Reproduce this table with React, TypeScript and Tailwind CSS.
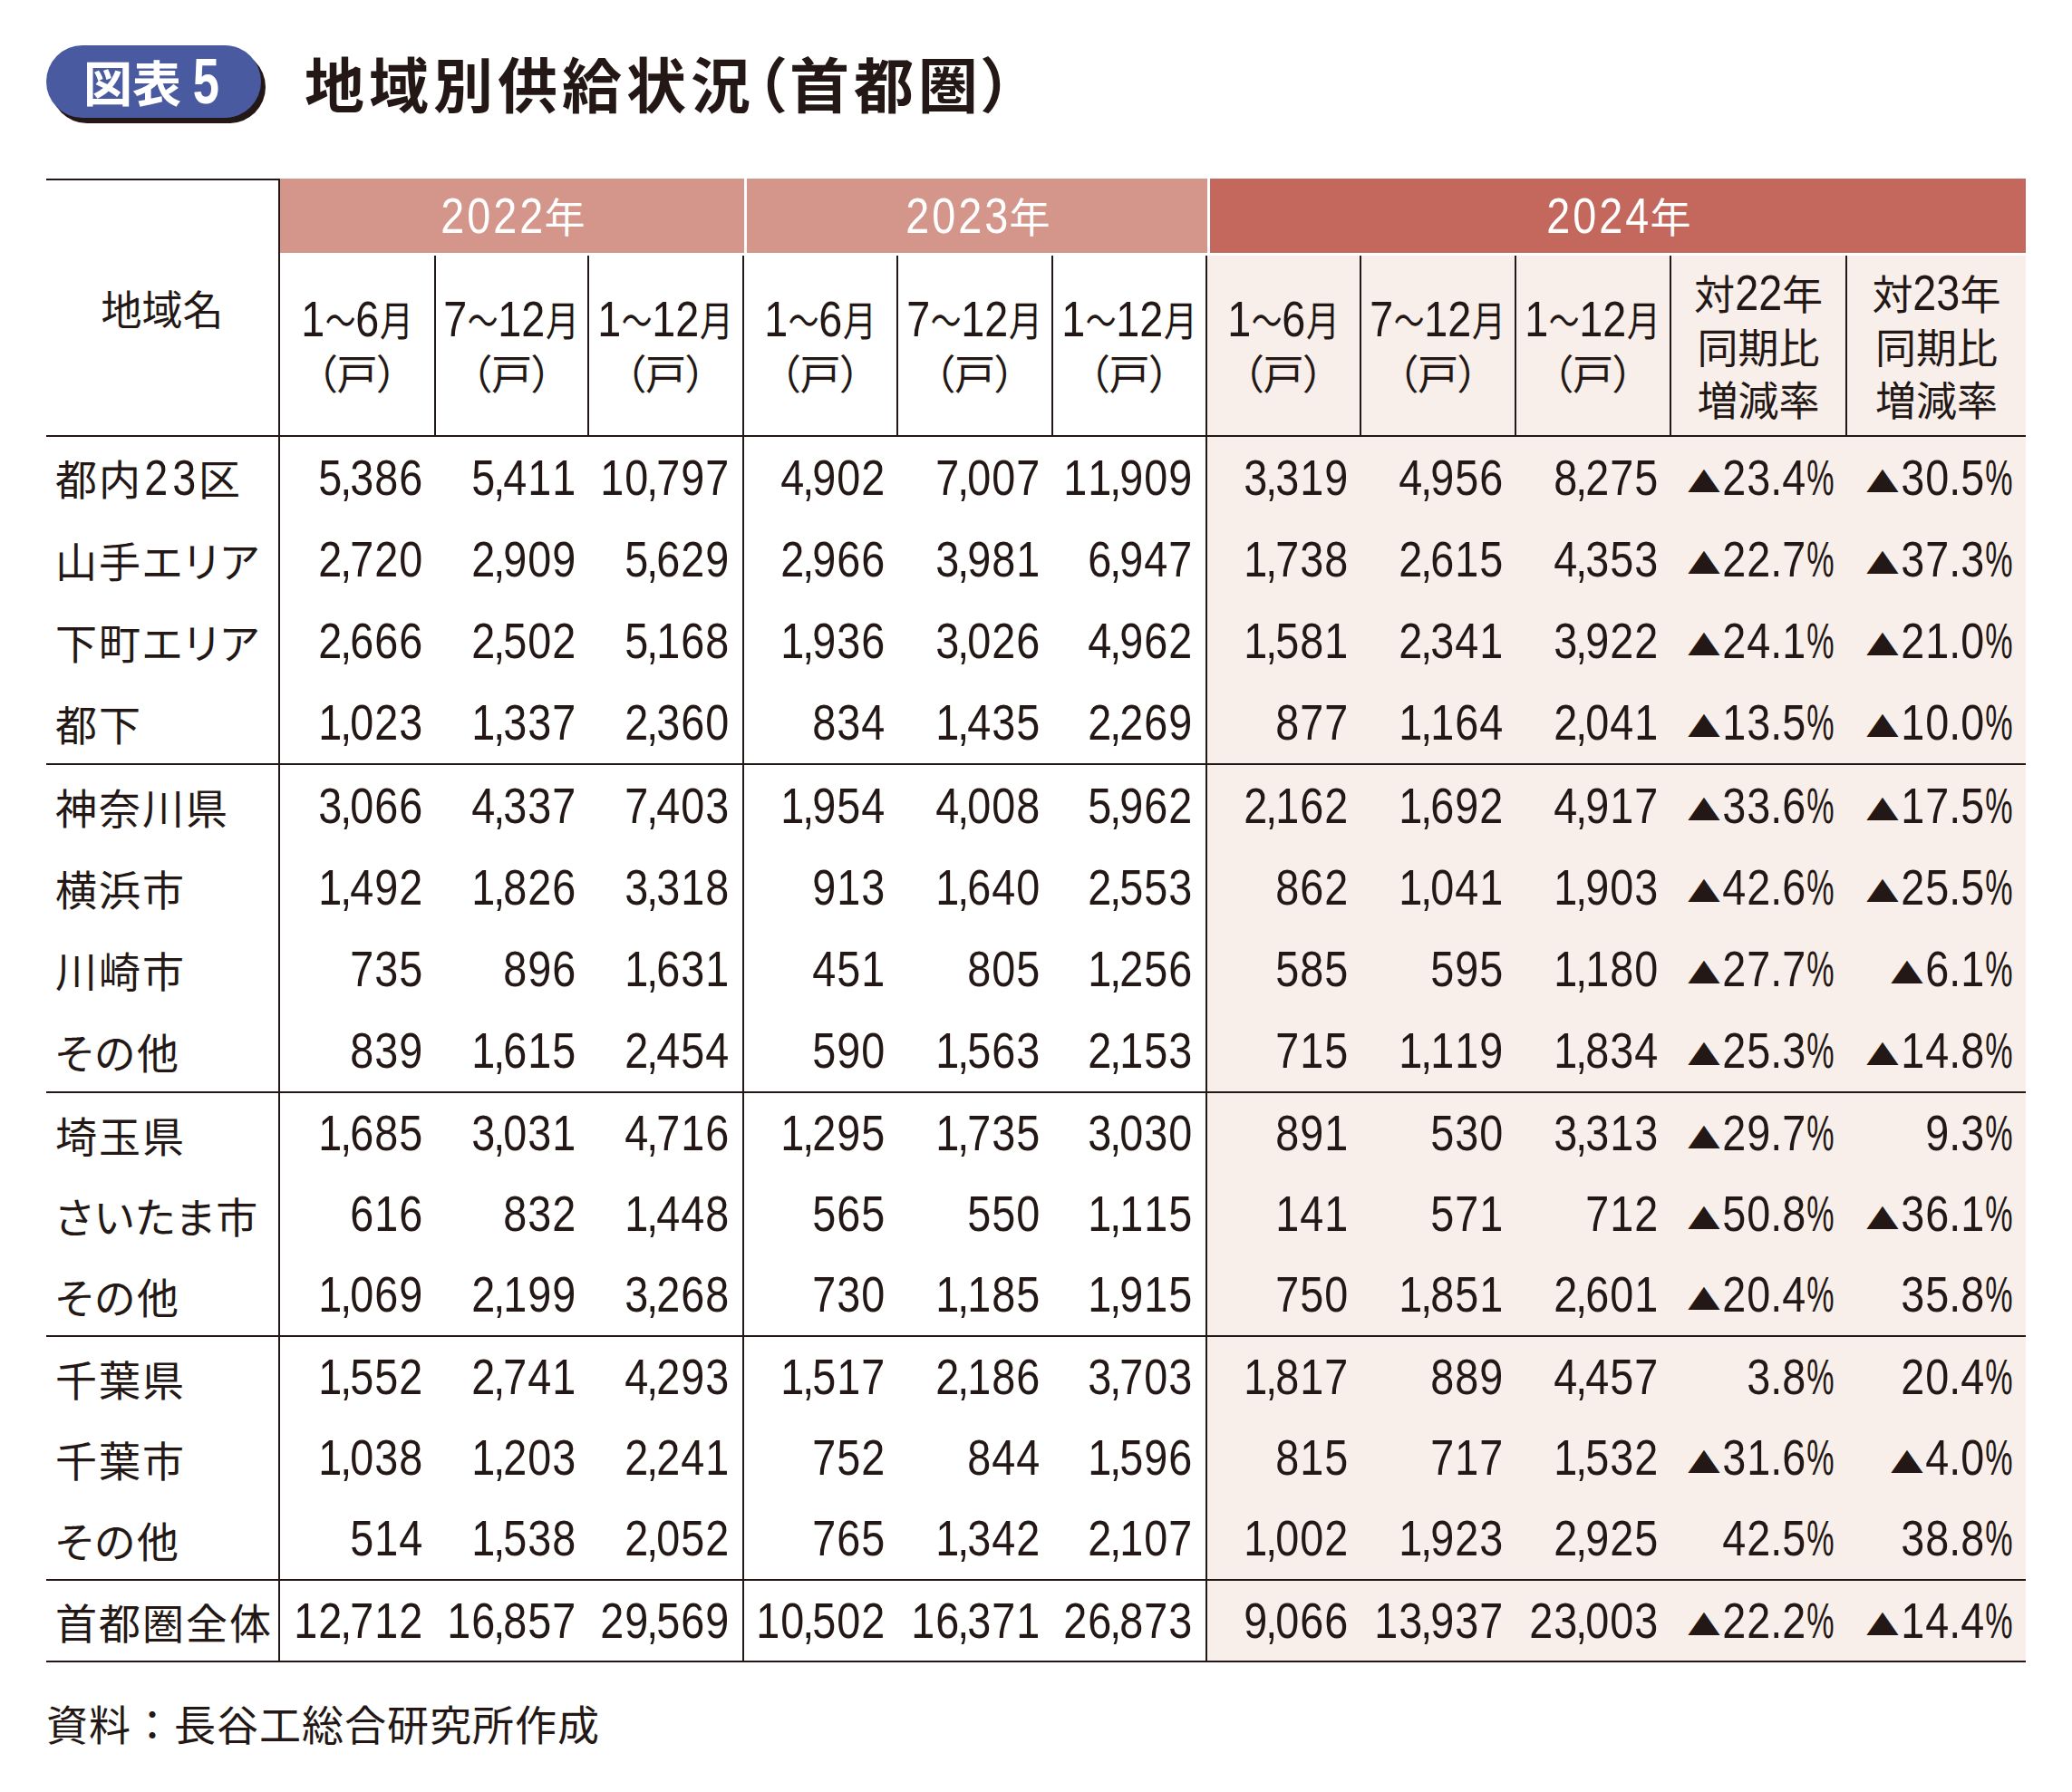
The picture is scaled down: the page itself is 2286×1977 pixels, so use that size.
import type { ReactNode } from 'react'

const NUMFONT = "[font-family:'Liberation_Sans','Arial',sans-serif] text-[55px]"
const JPFONT = "[font-family:'Noto_Sans_CJK_JP',sans-serif]"
const JP = `${JPFONT} text-[45px] leading-none`
const LABEL = `${JPFONT} text-[46px] leading-none tracking-[2px] [font-feature-settings:'palt']`

const ROW_COLS =
  'grid grid-cols-[258px_172px_169px_171px_170px_171px_170px_170px_171px_171px_194px_197px]'
const SUB_COLS =
  'grid grid-cols-[172px_169px_171px_170px_171px_170px_170px_171px_171px_194px_197px]'

const PINK = 'bg-[#f8eeea]'
const LINE = 'border-[#231815]'

type Row = [string, ...string[]]

const sections: { rows: Row[]; h: string }[] = [
  {
    h: 'h-[90px]',
    rows: [
      ['都内23区', '5,386', '5,411', '10,797', '4,902', '7,007', '11,909', '3,319', '4,956', '8,275', '▲23.4%', '▲30.5%'],
      ['山手エリア', '2,720', '2,909', '5,629', '2,966', '3,981', '6,947', '1,738', '2,615', '4,353', '▲22.7%', '▲37.3%'],
      ['下町エリア', '2,666', '2,502', '5,168', '1,936', '3,026', '4,962', '1,581', '2,341', '3,922', '▲24.1%', '▲21.0%'],
      ['都下', '1,023', '1,337', '2,360', '834', '1,435', '2,269', '877', '1,164', '2,041', '▲13.5%', '▲10.0%'],
    ],
  },
  {
    h: 'h-[90px]',
    rows: [
      ['神奈川県', '3,066', '4,337', '7,403', '1,954', '4,008', '5,962', '2,162', '1,692', '4,917', '▲33.6%', '▲17.5%'],
      ['横浜市', '1,492', '1,826', '3,318', '913', '1,640', '2,553', '862', '1,041', '1,903', '▲42.6%', '▲25.5%'],
      ['川崎市', '735', '896', '1,631', '451', '805', '1,256', '585', '595', '1,180', '▲27.7%', '▲6.1%'],
      ['その他', '839', '1,615', '2,454', '590', '1,563', '2,153', '715', '1,119', '1,834', '▲25.3%', '▲14.8%'],
    ],
  },
  {
    h: 'h-[89px]',
    rows: [
      ['埼玉県', '1,685', '3,031', '4,716', '1,295', '1,735', '3,030', '891', '530', '3,313', '▲29.7%', '9.3%'],
      ['さいたま市', '616', '832', '1,448', '565', '550', '1,115', '141', '571', '712', '▲50.8%', '▲36.1%'],
      ['その他', '1,069', '2,199', '3,268', '730', '1,185', '1,915', '750', '1,851', '2,601', '▲20.4%', '35.8%'],
    ],
  },
  {
    h: 'h-[89px]',
    rows: [
      ['千葉県', '1,552', '2,741', '4,293', '1,517', '2,186', '3,703', '1,817', '889', '4,457', '3.8%', '20.4%'],
      ['千葉市', '1,038', '1,203', '2,241', '752', '844', '1,596', '815', '717', '1,532', '▲31.6%', '▲4.0%'],
      ['その他', '514', '1,538', '2,052', '765', '1,342', '2,107', '1,002', '1,923', '2,925', '42.5%', '38.8%'],
    ],
  },
]

const total: Row = ['首都圏全体', '12,712', '16,857', '29,569', '10,502', '16,371', '26,873', '9,066', '13,937', '23,003', '▲22.2%', '▲14.4%']

const subHeads: string[][] = [
  ['1～6月', '（戸）'],
  ['7～12月', '（戸）'],
  ['1～12月', '（戸）'],
  ['1～6月', '（戸）'],
  ['7～12月', '（戸）'],
  ['1～12月', '（戸）'],
  ['1～6月', '（戸）'],
  ['7～12月', '（戸）'],
  ['1～12月', '（戸）'],
  ['対22年', '同期比', '増減率'],
  ['対23年', '同期比', '増減率'],
]

// condensed numerals: each glyph centred in a fixed box and squeezed horizontally
function Glyph({ ch, dw }: { ch: string; dw: string }) {
  const box = ch === ',' ? 'w-[8px]' : ch === '.' ? 'w-[12px]' : ch === '%' ? 'w-[31px]' : dw
  const sq = ch === '%' ? 'scale-x-[0.62]' : 'scale-x-[0.85]'
  return (
    <span className={`inline-flex justify-center ${box}`}>
      <span className={`inline-block leading-none ${NUMFONT} ${sq}`}>{ch}</span>
    </span>
  )
}

function Squeezed({ ch, w, sq }: { ch: string; w: string; sq: string }) {
  return (
    <span className={`inline-flex justify-center ${w}`}>
      <span className={`inline-block ${JP} ${sq}`}>{ch}</span>
    </span>
  )
}

function Chars({
  text,
  dw,
  squeeze,
  jp = JP,
}: {
  text: string
  dw: string
  squeeze?: boolean
  jp?: string
}) {
  const out: ReactNode[] = []
  const tokens = text.match(/[0-9.,%]|～|月|[^0-9.,%～月]+/g) ?? []
  tokens.forEach((t, i) => {
    if (/^[0-9.,%]$/.test(t)) out.push(<Glyph key={i} ch={t} dw={dw} />)
    else if (squeeze && t === '～') out.push(<Squeezed key={i} ch={t} w="w-[34px]" sq="scale-x-[0.75]" />)
    else if (squeeze && t === '月') out.push(<Squeezed key={i} ch={t} w="w-[38px]" sq="scale-x-[0.82]" />)
    else
      out.push(
        <span key={i} className={`${jp} ${t.includes('（') ? "[font-feature-settings:'palt']" : ''}`}>
          {t}
        </span>,
      )
  })
  return <span className="inline-flex items-baseline whitespace-nowrap">{out}</span>
}

function Val({ v }: { v: string }) {
  const neg = v.startsWith('▲')
  const body = neg ? v.slice(1) : v
  return (
    <span className="flex items-center">
      {neg && (
        <span className="inline-flex items-center justify-center w-[30px] h-[22px] mr-[5px]">
          <span className="inline-block leading-none [font-family:'DejaVu_Sans',sans-serif] text-[46px] scale-y-[0.72]">
            ▲
          </span>
        </span>
      )}
      <span className="inline-flex">
        {[...body].map((ch, i) => (
          <Glyph key={i} ch={ch} dw="w-[27px]" />
        ))}
      </span>
    </span>
  )
}

function DataRow({ row, h }: { row: Row; h: string }) {
  const [label, ...vals] = row
  return (
    <div className={`${ROW_COLS} ${h}`}>
      <div className={`flex items-center pl-[10px] border-r-2 ${LINE}`}>
        <Chars text={label} dw="w-[31px]" jp={LABEL} />
      </div>
      {vals.map((v, i) => (
        <div
          key={i}
          className={`flex items-center justify-end pr-[14px] ${i === 2 || i === 5 ? `border-r-2 ${LINE}` : ''} ${i >= 6 ? PINK : ''}`}
        >
          <Val v={v} />
        </div>
      ))}
    </div>
  )
}

export default function App() {
  return (
    <div className="min-h-[1977px] w-[2286px] bg-white text-[#231815] pl-[51px] pt-[50px]">
      <div className="flex items-center h-[80px]">
        <div className="w-[237px] h-[80px] shrink-0 rounded-full bg-[#4a5aa0] shadow-[5px_6px_0_#231815] flex items-center justify-center text-white">
          <span className={`${JPFONT} text-[54px] font-bold leading-none`}>図表</span>
          <span className="[font-family:'Liberation_Sans',sans-serif] text-[70px] font-bold leading-none ml-[8px] inline-block scale-x-[0.75]">
            5
          </span>
        </div>
        <h1
          className={`ml-[48px] ${JPFONT} text-[66px] font-bold tracking-[5px] leading-none [font-feature-settings:'palt'] whitespace-nowrap`}
        >
          地域別供給状況（首都圏）
        </h1>
      </div>

      <div className="mt-[67px] w-[2184px]">
        <div className={`flex border-b-2 ${LINE}`}>
          <div className={`w-[258px] shrink-0 border-t-2 border-r-2 ${LINE} flex items-center justify-center`}>
            <span className={JP}>地域名</span>
          </div>
          <div className="flex-1 flex flex-col">
            <div className="flex h-[82px] text-white">
              <div className="w-[512px] bg-[#d4968b] flex items-center justify-center">
                <Chars text="2022年" dw="w-[29px]" />
              </div>
              <div className="w-[511px] border-l-[3px] border-white bg-[#d4968b] flex items-center justify-center">
                <Chars text="2023年" dw="w-[29px]" />
              </div>
              <div className="flex-1 border-l-[3px] border-white bg-[#c4675c] flex items-center justify-center">
                <Chars text="2024年" dw="w-[29px]" />
              </div>
            </div>
            <div className="h-[3px]" />
            <div className={`${SUB_COLS} h-[198px]`}>
              {subHeads.map((lines, i) => (
                <div
                  key={i}
                  className={`flex flex-col justify-center ${i < 10 ? `border-r-2 ${LINE}` : ''} ${i >= 6 ? PINK : ''}`}
                >
                  {lines.map((l, j) => (
                    <div key={j} className="h-[58px] flex items-center justify-center">
                      <Chars text={l} dw="w-[26px]" squeeze={i < 9 && j === 0} />
                    </div>
                  ))}
                </div>
              ))}
            </div>
          </div>
        </div>

        {sections.map((s, si) => (
          <div key={si} className={`border-b-2 ${LINE}`}>
            {s.rows.map((r, ri) => (
              <DataRow key={ri} row={r} h={s.h} />
            ))}
          </div>
        ))}
        <div className={`border-b-2 ${LINE}`}>
          <DataRow row={total} h="h-[88px]" />
        </div>
      </div>

      <p className={`mt-[43px] ${JPFONT} text-[46px] tracking-[1px] leading-none`}>資料：長谷工総合研究所作成</p>
    </div>
  )
}
